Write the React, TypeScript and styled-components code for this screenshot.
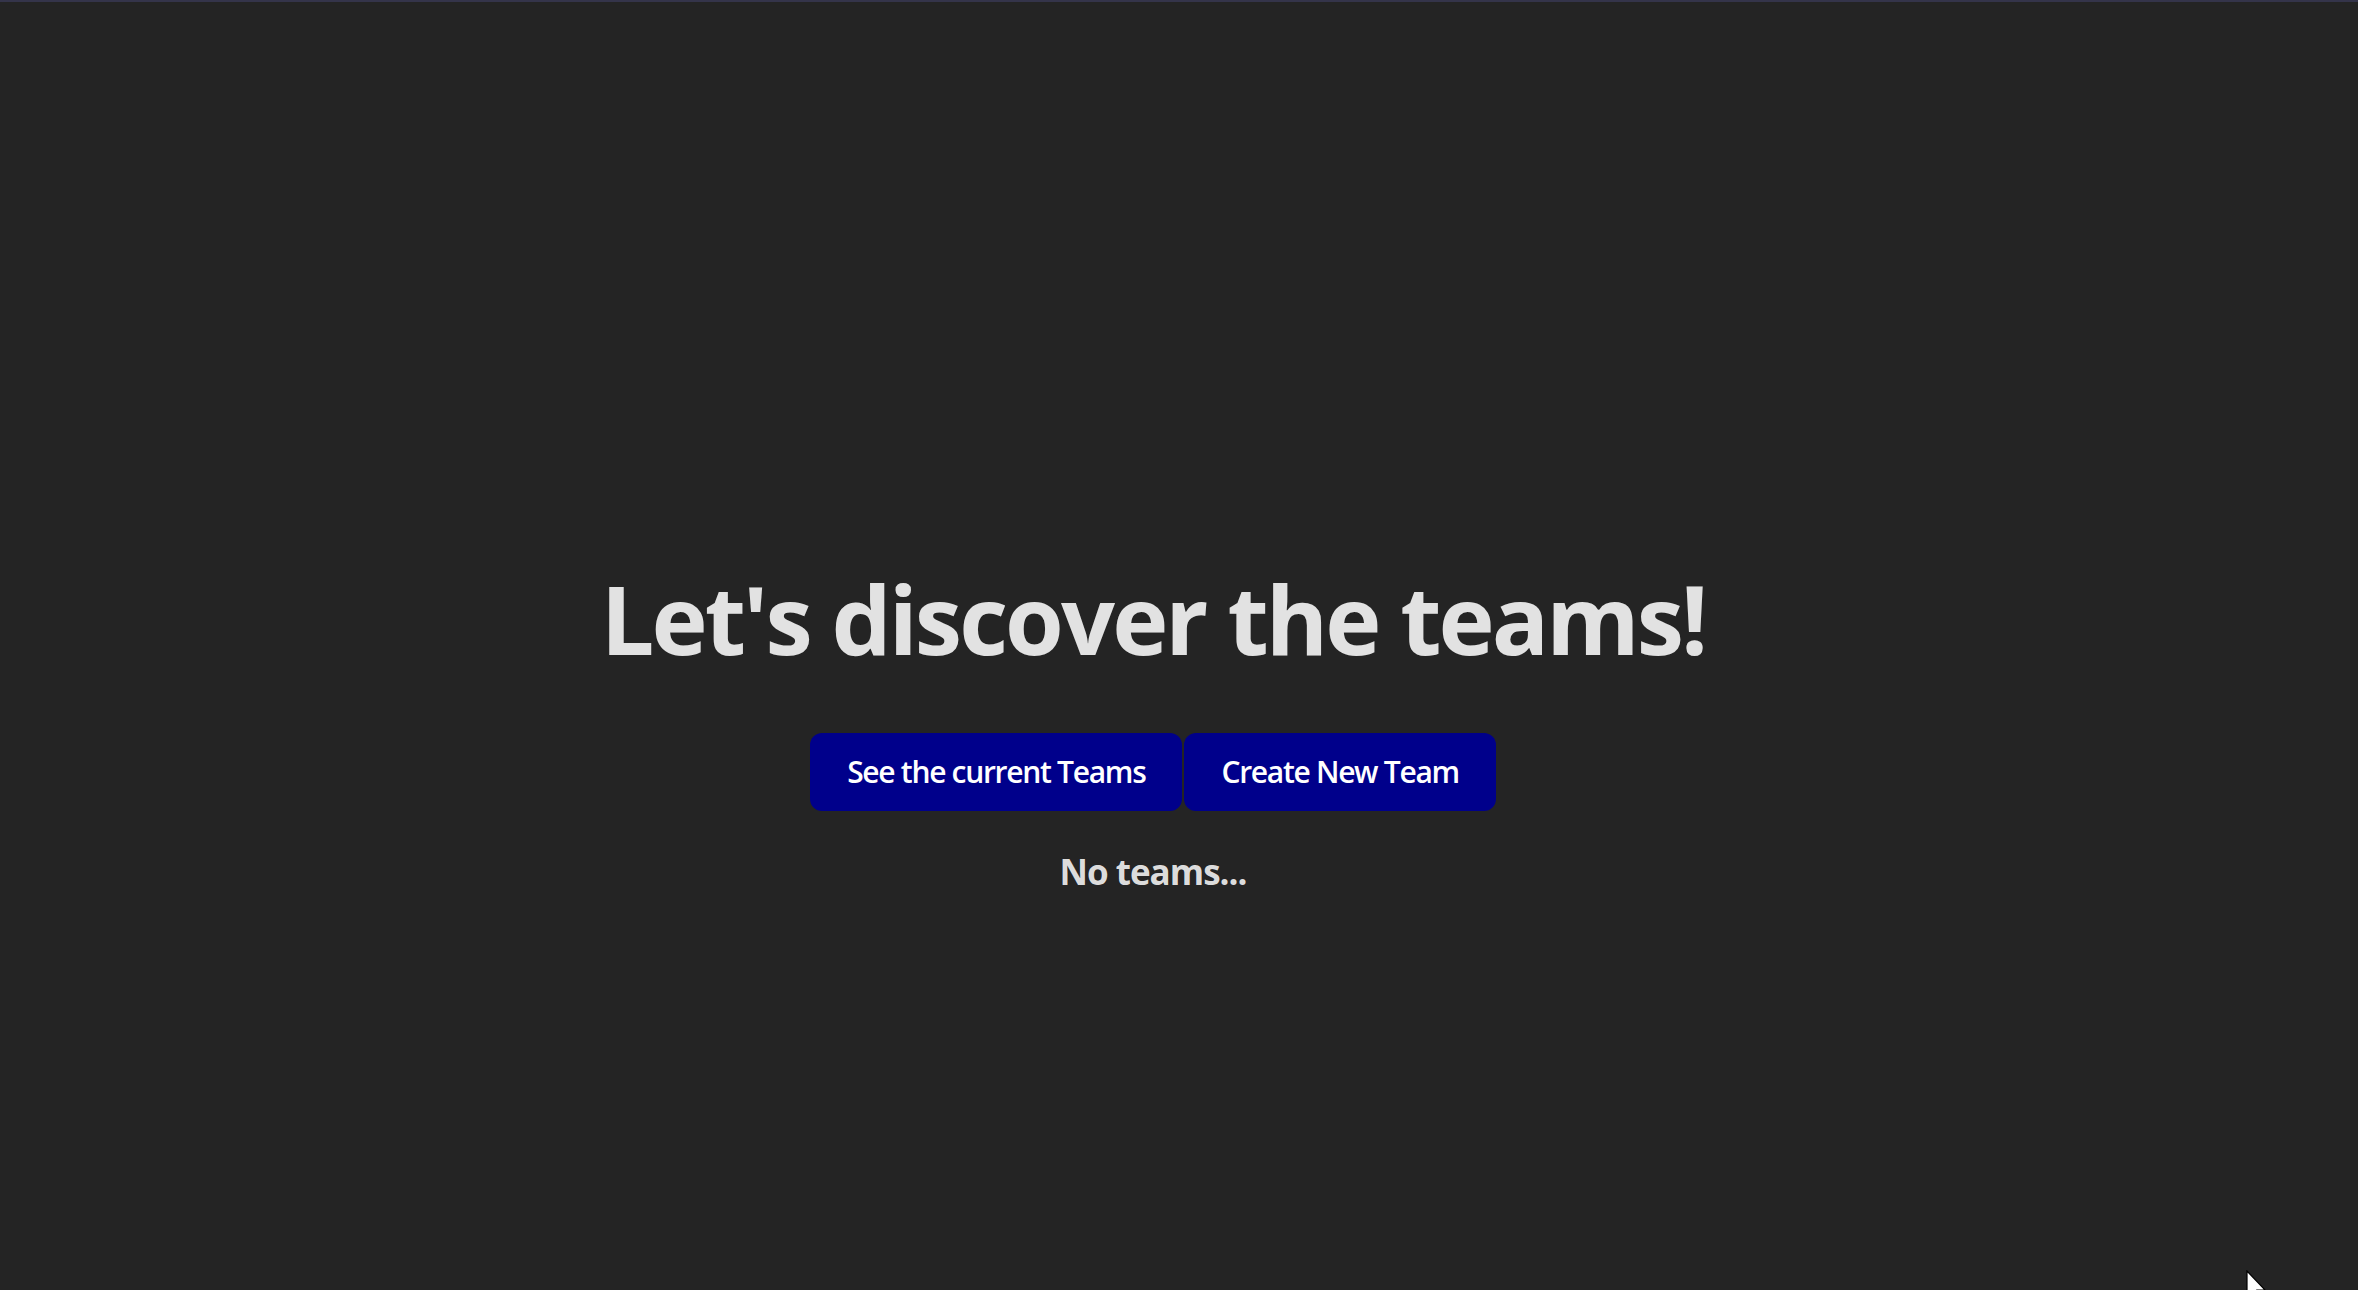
import React from "react";
import styled, { createGlobalStyle } from "styled-components";

const Global = createGlobalStyle`
  html, body { margin: 0; padding: 0; }
  body {
    background: #242424;
    color: rgba(255, 255, 255, 0.87);
    font-family: "Open Sans", "Noto Sans", sans-serif;
    line-height: 1.5;
    overflow: hidden;
  }
`;

const Page = styled.main`
  position: relative;
  box-sizing: border-box;
  height: 1290px;
  border-top: 2px solid #34344a;
  padding: 564px 52px 0 0;
  display: flex;
  flex-direction: column;
  align-items: center;
  text-align: center;
`;

const Title = styled.h1`
  margin: 0 0 62px;
  font-size: 95px;
  line-height: 1.1;
  font-weight: 700;
  letter-spacing: -2.9px;
`;

const ButtonRow = styled.div`
  display: flex;
  gap: 2px;
`;

const ActionButton = styled.button`
  box-sizing: border-box;
  height: 78px;
  padding: 0 37px;
  border: none;
  border-radius: 12px;
  background: #00008b;
  color: #ffffff;
  font-family: inherit;
  font-size: 30px;
  font-weight: 600;
  letter-spacing: -1.3px;
  cursor: pointer;
`;

const Empty = styled.h3`
  margin: 35px 0 0;
  font-size: 35px;
  line-height: 1.5;
  font-weight: 700;
  letter-spacing: -1px;
`;

const Pointer = styled.svg`
  position: absolute;
  left: 2246px;
  top: 1268px;
`;

export default function App() {
  return (
    <>
      <Global />
      <Page>
        <Title>Let's discover the teams!</Title>
        <ButtonRow>
          <ActionButton>See the current Teams</ActionButton>
          <ActionButton>Create New Team</ActionButton>
        </ButtonRow>
        <Empty>No teams...</Empty>
        <Pointer width="24" height="34" viewBox="0 0 24 34">
          <path d="M1 1 L1 27 L7 21 L11 31 L15 29 L11 20 L19 20 Z" fill="#ffffff" stroke="#000000" strokeWidth="1.2" />
        </Pointer>
      </Page>
    </>
  );
}
